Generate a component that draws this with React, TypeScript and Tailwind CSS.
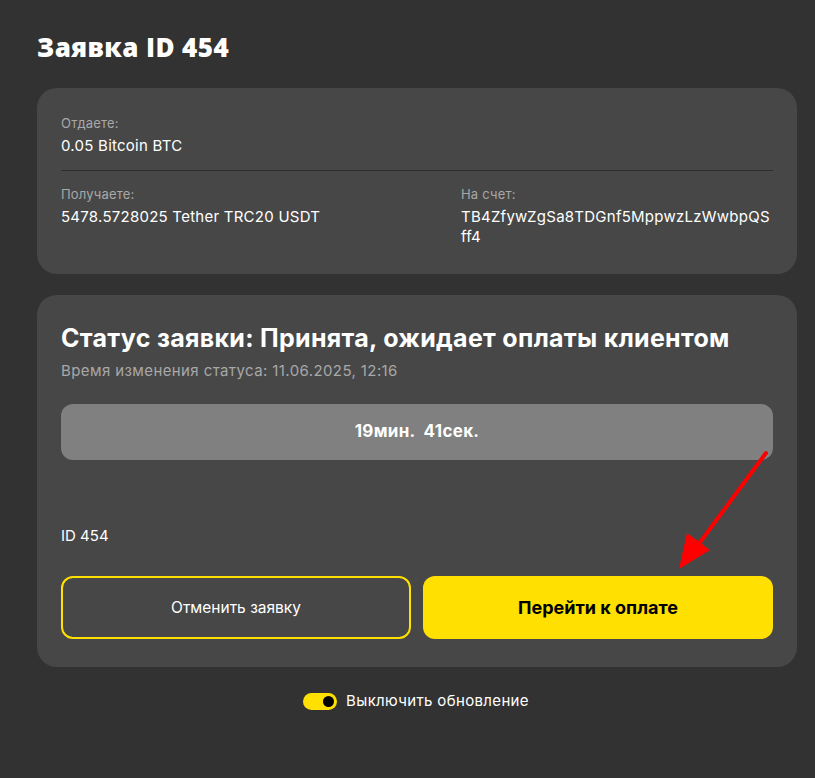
import React from "react";

export default function App() {
  return (
    <div className="min-h-[778px] w-full bg-[#323232] relative" style={{ fontFamily: "Inter, 'Noto Sans', sans-serif" }}>
      <div className="w-[760px] ml-[37px] pt-[30px] pb-10">
        <h1 className="text-[26px] leading-[34px] font-extrabold text-white tracking-[0.4px]" style={{ fontFamily: "'Open Sans', Inter, sans-serif" }}>
          Заявка ID 454
        </h1>
        <div className="mt-[24px] bg-[#474747] rounded-[20px] px-6 pt-[26px] pb-[27px]">
          <div className="text-[13px] leading-[18px] text-[#a8a8a8] tracking-[0.2px]">Отдаете:</div>
          <div className="mt-1 text-[15px] leading-[20px] text-white tracking-[0.25px]">0.05 Bitcoin BTC</div>
          <div className="mt-[14px] h-px bg-[#2e2e2e]" />
          <div className="mt-[14px] grid grid-cols-[400px_1fr]">
            <div>
              <div className="text-[13px] leading-[18px] text-[#a8a8a8] tracking-[0.2px]">Получаете:</div>
              <div className="mt-1 text-[15px] leading-[20px] text-white tracking-[0.25px]">5478.5728025 Tether TRC20 USDT</div>
            </div>
            <div>
              <div className="text-[13px] leading-[18px] text-[#a8a8a8] tracking-[0.2px]">На счет:</div>
              <div className="mt-1 text-[15px] leading-[20px] text-white break-all tracking-[0.25px]">TB4ZfywZgSa8TDGnf5MppwzLzWwbpQSff4</div>
            </div>
          </div>
        </div>
        <div className="mt-[21px] bg-[#474747] rounded-[20px] px-6 pt-[28px] pb-[28px]">
          <div className="text-[25px] leading-[30px] font-bold text-white tracking-[0.3px]">Статус заявки: Принята, ожидает оплаты клиентом</div>
          <div className="mt-2 text-[15px] leading-[20px] text-[#a8a8a8] tracking-[0.4px]">Время изменения статуса: 11.06.2025, 12:16</div>
          <div className="mt-[23px] h-[56px] rounded-[12px] bg-[#808080] flex items-center justify-center text-[17px] font-bold text-white whitespace-pre tracking-[0.3px]">
            {"19мин.  41сек."}
          </div>
          <div className="mt-[66px] text-[15px] leading-[20px] text-white">ID 454</div>
          <div className="mt-[30px] grid grid-cols-2 gap-3">
            <button className="h-[63px] rounded-[12px] border-2 border-[#ffe000] text-white text-[15.5px]">Отменить заявку</button>
            <button className="h-[63px] rounded-[12px] bg-[#ffe000] text-black text-[18px] font-bold">Перейти к оплате</button>
          </div>
        </div>
        <div className="mt-[23px] flex items-center justify-center gap-[9px] pr-[2px]">
          <div className="w-[34px] h-[17px] rounded-full bg-[#ffe000] flex items-center justify-end pr-[3px]">
            <div className="w-[11px] h-[11px] rounded-full bg-black" />
          </div>
          <span className="text-[15px] text-white tracking-[0.35px]">Выключить обновление</span>
        </div>
      </div>
      <svg className="absolute left-0 top-0 pointer-events-none" width="815" height="778">
        <line x1="766" y1="453" x2="698" y2="545" stroke="#ff0000" strokeWidth="4" strokeLinecap="round" />
        <polygon points="679,569 687,533 710,550" fill="#ff0000" />
      </svg>
    </div>
  );
}
